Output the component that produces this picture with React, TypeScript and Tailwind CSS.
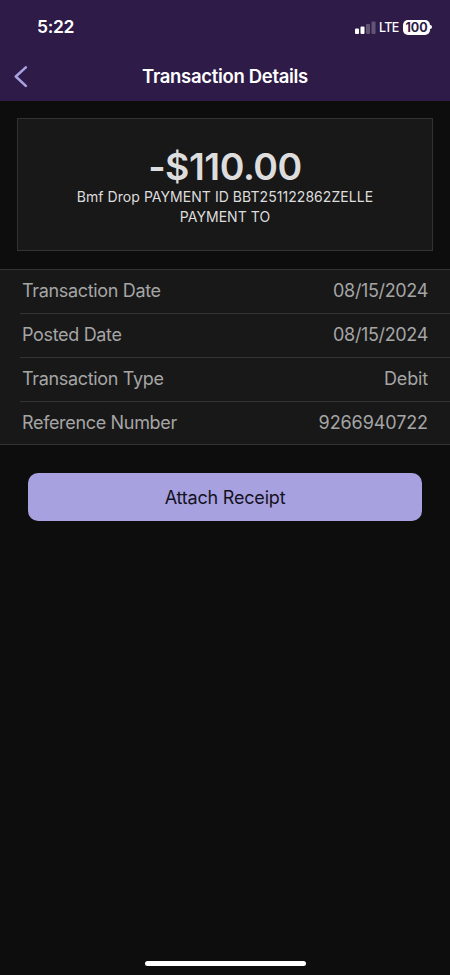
const details = [
  { label: "Transaction Date", value: "08/15/2024", tracking: "tracking-[-0.35px]" },
  { label: "Posted Date", value: "08/15/2024", tracking: "tracking-[-0.35px]" },
  { label: "Transaction Type", value: "Debit", tracking: "tracking-[-0.15px]" },
  { label: "Reference Number", value: "9266940722", tracking: "tracking-[-0.1px]" },
];

function StatusBar() {
  return (
    <div className="flex h-[53px] items-center justify-between pt-px pr-[18px] pl-[37px] text-white">
      <span className="pt-px text-[17.5px] font-semibold tracking-[-0.3px]">5:22</span>
      <div className="flex items-center">
        <svg className="h-[13px] w-[21px]" viewBox="0 0 21 13" fill="#ffffff">
          <rect x="0" y="7.5" width="4" height="5.5" rx="1" />
          <rect x="5.5" y="5.5" width="4" height="7.5" rx="1" />
          <rect x="11" y="3" width="4" height="10" rx="1" opacity="0.25" />
          <rect x="16.5" y="0.5" width="4" height="12.5" rx="1" opacity="0.25" />
        </svg>
        <span className="ml-[3px] w-[20px] pt-[3px] text-[12.5px] leading-none font-medium tracking-[-0.6px]">
          LTE
        </span>
        <span className="ml-1 flex h-[15px] w-[27px] items-center justify-center rounded-[5px] bg-white pt-0.5 text-[12.5px] leading-none font-bold tracking-[-0.1px] text-[#2e1b47]">
          100
        </span>
        <span className="h-1 w-0.5 rounded-r bg-white" />
      </div>
    </div>
  );
}

export default function App() {
  return (
    <div className="flex h-[975px] w-[450px] flex-col bg-[#0d0d0d] font-['Inter','Liberation_Sans',sans-serif]">
      <header className="h-[101px] bg-[#2e1b47]">
        <StatusBar />
        <div className="grid h-12 grid-cols-[40px_1fr_40px] items-center">
          <svg
            className="ml-[13px] h-[22px] w-4"
            viewBox="0 0 16 22"
            fill="none"
            stroke="#a7a1e0"
            strokeWidth="2.6"
            strokeLinecap="round"
            strokeLinejoin="round"
          >
            <path d="M12.8 1.4 2.8 10.5l10 9.4" />
          </svg>
          <h1 className="text-center text-[18.5px] font-semibold tracking-[-0.32px] text-white">
            Transaction Details
          </h1>
        </div>
      </header>

      <section className="mx-[17px] mt-[17px] flex h-[133px] flex-col items-center border border-[#333333] bg-[#181818] pt-7 text-center text-[#dddddd]">
        <div className="text-[37.5px] leading-10 font-semibold tracking-[-0.5px]">-$110.00</div>
        <p className="text-[14px] leading-[19.5px] tracking-[0.05px]">
          Bmf Drop PAYMENT ID BBT251122862ZELLE
          <br />
          PAYMENT TO
        </p>
      </section>

      <dl className="mt-[18px] border-y border-[#333333] bg-[#181818]">
        {details.map((row) => (
          <div
            key={row.label}
            className="ml-5 flex h-11 items-center justify-between border-b border-[#333333] pr-[22px] pb-0.5 pl-0.5 text-[18px] text-[#a5a5a5] last:h-[42px] last:border-b-0 last:pb-px"
          >
            <dt className="tracking-[-0.33px]">{row.label}</dt>
            <dd className={row.tracking}>{row.value}</dd>
          </div>
        ))}
      </dl>

      <button className="mx-7 mt-7 h-12 rounded-[10px] bg-[#a7a1e0] text-[18px] tracking-[-0.2px] text-[#15121f]">
        Attach Receipt
      </button>

      <div className="mx-auto mt-auto mb-[9px] h-[5px] w-[161px] rounded-full bg-white" />
    </div>
  );
}
